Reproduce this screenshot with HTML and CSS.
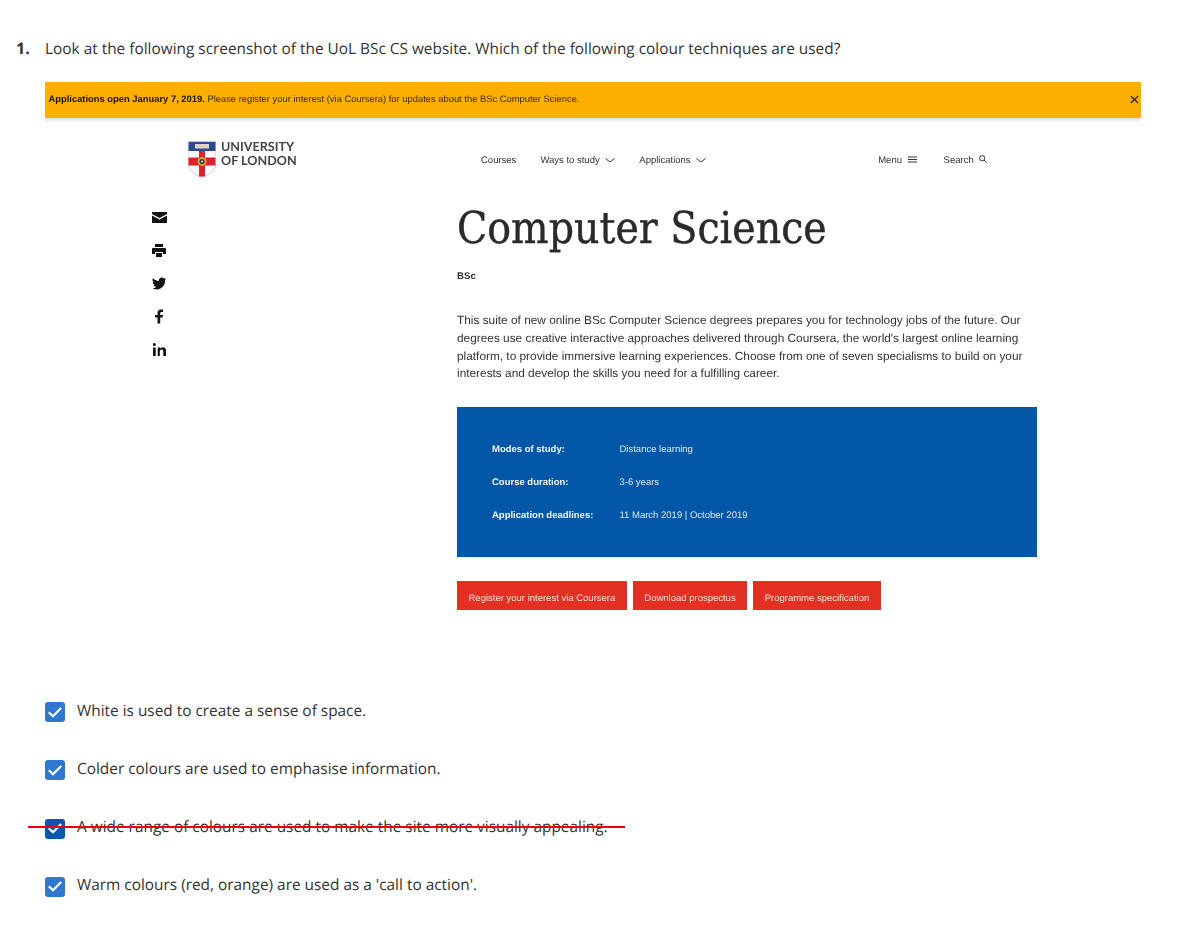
FILE: index.html
```html
<!DOCTYPE html>
<html lang="en">
<head>
  <meta charset="UTF-8">
  <title>Quiz question</title>
  <link rel="stylesheet" href="styles.css">
</head>
<body>

  <div class="question">
    <span class="number">1.</span>
    <p class="question-text">Look at the following screenshot of the UoL BSc CS website. Which of the following colour techniques are used?</p>
  </div>

  <div class="shot">
    <div class="notice">
      <p><strong>Applications open January 7, 2019.</strong> Please register your interest (via Coursera) for updates about the BSc Computer Science.</p>
      <svg class="notice-close" width="9" height="9" viewBox="0 0 10 10"><path d="M1 1l8 8M9 1l-8 8" stroke="#333" stroke-width="1.5" fill="none"/></svg>
    </div>

    <div class="site-header">
      <div class="logo">
        <svg width="28" height="37" viewBox="0 0 28 36">
          <path d="M0 0h28v22q0 8-14 14Q0 30 0 22z" fill="#fff" stroke="#aaa" stroke-width=".6"/>
          <rect x=".5" y=".5" width="27" height="9" fill="#2b4a94"/>
          <rect x="7" y="2.5" width="14" height="4.5" fill="#d8d4c4"/>
          <rect x="11" y="9.500" width="6" height="25.500" fill="#e0202c"/>
          <rect x=".5" y="16" width="27" height="8" fill="#e0202c"/>
          <circle cx="14" cy="20" r="4.500" fill="#c9a63a"/>
          <circle cx="14" cy="20" r="2.500" fill="#333"/>
          <circle cx="14" cy="20" r="1" fill="#eee"/>
        </svg>
        <div class="logo-text">UNIVERSITY<br>OF LONDON</div>
      </div>
      <nav class="nav">
        <span>Courses</span>
        <span>Ways to study <svg width="10" height="5" viewBox="0 0 10 5"><path d="M.5.500L5 4 9.500.500" stroke="#333" fill="none"/></svg></span>
        <span>Applications <svg width="10" height="5" viewBox="0 0 10 5"><path d="M.5.500L5 4 9.500.500" stroke="#333" fill="none"/></svg></span>
      </nav>
      <nav class="nav nav-right">
        <span>Menu <svg width="9" height="7" viewBox="0 0 9 7"><path d="M0 1h9M0 3.500h9M0 6h9" stroke="#333" fill="none"/></svg></span>
        <span>Search <svg width="8" height="8" viewBox="0 0 8 8"><circle cx="3.200" cy="3.200" r="2.600" stroke="#333" fill="none"/><path d="M5 5l2.700 2.700" stroke="#333" fill="none"/></svg></span>
      </nav>
    </div>

    <div class="site-main">
      <div class="social">
        <svg width="15" height="11" viewBox="0 0 15 11"><path d="M0 0h15v2L7.500 6 0 2zM0 3.500L7.500 7.500 15 3.500V11H0z" fill="#111"/></svg>
        <svg width="14" height="13" viewBox="0 0 14 13"><path d="M3 0h8v3H3zM1 4h12q1 0 1 1v5h-3V8H3v2H0V5q0-1 1-1zM4 9h6v4H4z" fill="#111"/></svg>
        <svg width="14" height="12" viewBox="0 0 14 12"><path d="M14 1.500l-1.500.400L13.700.300l-1.800.800A3 3 0 0 0 6.800 3.800 8 8 0 0 1 1 .800a3 3 0 0 0 .9 3.900L.6 4.400a3 3 0 0 0 2.300 2.900l-1.300.100a3 3 0 0 0 2.700 2A6 6 0 0 1 0 10.600 8.500 8.500 0 0 0 13 3z" fill="#111"/></svg>
        <svg width="8" height="14" viewBox="0 0 8 14"><path d="M2.500 14V8H0V5.500h2.500V3.500Q2.500 0 6 0h2v2.500H6.500q-1.300 0-1.300 1.200v1.800H8L7.600 8H5.200v6z" fill="#111"/></svg>
        <svg width="13" height="13" viewBox="0 0 13 13"><path d="M0 4.500h2.700V13H0zM1.350 0a1.500 1.500 0 1 1 0 3 1.500 1.500 0 0 1 0-3zM4.700 4.500h2.600v1.200Q8.200 4.300 10 4.300q3 0 3 3.700v5h-2.700V8.500q0-2-1.500-2-2 0-2 2.200V13H4.700z" fill="#111"/></svg>
      </div>
      <div class="content">
        <h1>Computer Science</h1>
        <p class="award">BSc</p>
        <p class="intro">This suite of new online BSc Computer Science degrees prepares you for technology jobs of the future. Our degrees use creative interactive approaches delivered through Coursera, the world's largest online learning platform, to provide immersive learning experiences. Choose from one of seven specialisms to build on your interests and develop the skills you need for a fulfilling career.</p>
        <div class="facts">
          <strong>Modes of study:</strong><span>Distance learning</span>
          <strong>Course duration:</strong><span>3-6 years</span>
          <strong>Application deadlines:</strong><span>11 March 2019 | October 2019</span>
        </div>
        <div class="buttons">
          <a class="btn btn-wide">Register your interest via Coursera</a>
          <a class="btn">Download prospectus</a>
          <a class="btn">Programme specification</a>
        </div>
      </div>
    </div>
  </div>

  <ul class="answers">
    <li><span class="check"><svg width="14" height="11" viewBox="0 0 14 11"><path d="M.8 5.200L5 9.300 13.200 1" stroke="#fff" stroke-width="2.200" fill="none"/></svg></span>White is used to create a sense of space.</li>
    <li><span class="check"><svg width="14" height="11" viewBox="0 0 14 11"><path d="M.8 5.200L5 9.300 13.200 1" stroke="#fff" stroke-width="2.200" fill="none"/></svg></span>Colder colours are used to emphasise information.</li>
    <li class="struck"><span class="check check-dark"><svg width="14" height="11" viewBox="0 0 14 11"><path d="M.8 5.200L5 9.300 13.200 1" stroke="#fff" stroke-width="2.200" fill="none"/></svg></span>A wide range of colours are used to make the site more visually appealing.</li>
    <li><span class="check"><svg width="14" height="11" viewBox="0 0 14 11"><path d="M.8 5.200L5 9.300 13.200 1" stroke="#fff" stroke-width="2.200" fill="none"/></svg></span>Warm colours (red, orange) are used as a 'call to action'.</li>
  </ul>

</body>
</html>
```

FILE: styles.css
```css
body {
  margin: 0;
  background: #fff;
  color: #333;
  font-family: 'Open Sans', sans-serif;
  font-size: 15.4px;
  text-rendering: geometricPrecision;
}

p {
  margin: 0;
}

.question {
  display: flex;
  align-items: center;
  padding: 38px 0 0 16px;
  height: 20px;
}

.number {
  width: 29px;
  font-weight: 700;
  font-size: 16px;
}

.shot {
  margin: 24px 0 0 45px;
  width: 1096px;
  height: 528px;
  overflow: hidden;
  filter: blur(0.4px);
  font-family: 'Liberation Sans', sans-serif;
}

.notice {
  display: flex;
  justify-content: space-between;
  align-items: center;
  box-sizing: border-box;
  height: 36px;
  padding: 0 2px 3px 3.5px;
  background: #fdaf00;
  box-shadow: 0 2px 3px rgba(0,0,0,0.15);
  color: #3a2c00;
  font-size: 9.4px;
}

.notice strong {
  color: #1a1400;
}

.notice-close {
  margin: 1px 0 0 0;
}

.site-header {
  display: flex;
  align-items: center;
  height: 82px;
  padding-left: 143px;
  font-size: 9.5px;
}

.logo {
  display: flex;
  gap: 5px;
  align-items: flex-start;
  width: 293px;
  height: 36px;
}

.logo-text {
  margin-top: -1px;
  font-family: Lato, sans-serif;
  font-size: 12.6px;
  font-weight: 700;
  line-height: 14px;
  color: #444;
}

.nav {
  display: flex;
  gap: 24px;
  padding-top: 2px;
}

.nav svg {
  margin-left: 3px;
  vertical-align: 0;
}

.nav-right {
  gap: 27px;
  margin-left: 172px;
}

.site-main {
  display: grid;
  grid-template-columns: 412px 580px;
}

.social {
  display: flex;
  flex-direction: column;
  align-items: center;
  width: 14px;
  margin: 1px 0 0 107px;
}

.social svg {
  height: 33px;
}

.content h1 {
  margin: 0;
  padding-top: 2px;
  height: 63px;
  font-family: 'DejaVu Serif Condensed', 'DejaVu Serif', serif;
  font-size: 44px;
  font-weight: 400;
  line-height: 54px;
  color: #2a2a2a;
  -webkit-text-stroke: 0.4px #2a2a2a;
}

.award {
  margin-top: 6px;
  font-size: 9.7px;
  font-weight: 700;
}

.intro {
  margin-top: 30px;
  font-size: 11.85px;
  line-height: 17.75px;
}

.facts {
  display: grid;
  grid-template-columns: 127.5px 1fr;
  grid-auto-rows: 33px;
  align-items: center;
  height: 150.5px;
  box-sizing: border-box;
  margin-top: 23.5px;
  padding: 26px 35px 0;
  background: #0057a8;
  color: #dce8f5;
  font-size: 9.5px;
}

.facts strong {
  color: #f2f6fb;
}

.buttons {
  display: flex;
  gap: 6px;
  margin-top: 24px;
}

.btn {
  padding: 12px 11.5px 0;
  height: 30px;
  box-sizing: border-box;
  background: #e43023;
  color: #f6dcd8;
  font-size: 9.5px;
  white-space: nowrap;
}

.answers {
  margin: 90px 0 0;
  padding: 0 0 0 45px;
  list-style: none;
}

.answers li {
  display: flex;
  align-items: center;
  gap: 12px;
  height: 20px;
  margin-bottom: 38.3px;
}

.check {
  display: flex;
  align-items: center;
  justify-content: center;
  flex: none;
  width: 20px;
  height: 20px;
  margin-top: 4px;
  border-radius: 3px;
  background: #2f77d1;
}

.check-dark {
  background: #0b55b5;
}

.struck {
  position: relative;
}

.struck::after {
  content: "";
  position: absolute;
  left: -17px;
  top: 9.5px;
  width: 597px;
  height: 2px;
  background: #e8000f;
}
```
